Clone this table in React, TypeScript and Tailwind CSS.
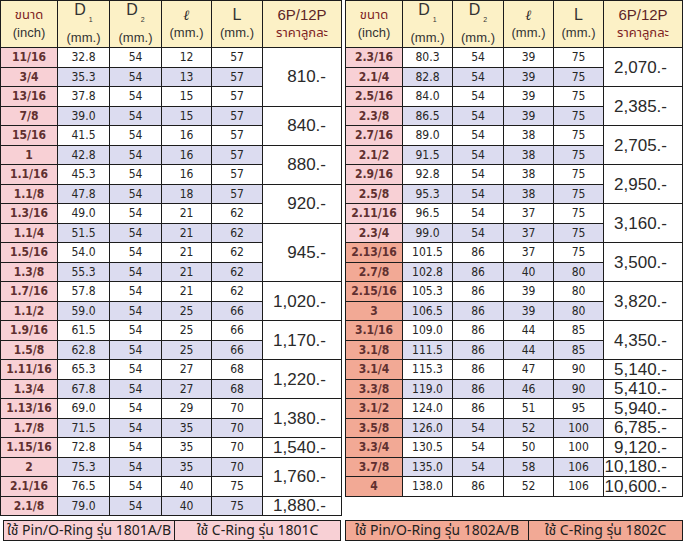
const left: string[][] = [
  ['11/16', '32.8', '54', '12', '57'],
  ['3/4', '35.3', '54', '13', '57'],
  ['13/16', '37.8', '54', '15', '57'],
  ['7/8', '39.0', '54', '15', '57'],
  ['15/16', '41.5', '54', '16', '57'],
  ['1', '42.8', '54', '16', '57'],
  ['1.1/16', '45.3', '54', '16', '57'],
  ['1.1/8', '47.8', '54', '18', '57'],
  ['1.3/16', '49.0', '54', '21', '62'],
  ['1.1/4', '51.5', '54', '21', '62'],
  ['1.5/16', '54.0', '54', '21', '62'],
  ['1.3/8', '55.3', '54', '21', '62'],
  ['1.7/16', '57.8', '54', '21', '62'],
  ['1.1/2', '59.0', '54', '25', '66'],
  ['1.9/16', '61.5', '54', '25', '66'],
  ['1.5/8', '62.8', '54', '25', '66'],
  ['1.11/16', '65.3', '54', '27', '68'],
  ['1.3/4', '67.8', '54', '27', '68'],
  ['1.13/16', '69.0', '54', '29', '70'],
  ['1.7/8', '71.5', '54', '35', '70'],
  ['1.15/16', '72.8', '54', '35', '70'],
  ['2', '75.3', '54', '35', '70'],
  ['2.1/16', '76.5', '54', '40', '75'],
  ['2.1/8', '79.0', '54', '40', '75'],
]

const leftPrices: [string, number][] = [
  ['810.-', 3], ['840.-', 2], ['880.-', 2], ['920.-', 2], ['945.-', 3], ['1,020.-', 2],
  ['1,170.-', 2], ['1,220.-', 2], ['1,380.-', 2], ['1,540.-', 1], ['1,760.-', 2], ['1,880.-', 1],
]

const right: string[][] = [
  ['2.3/16', '80.3', '54', '39', '75'],
  ['2.1/4', '82.8', '54', '39', '75'],
  ['2.5/16', '84.0', '54', '39', '75'],
  ['2.3/8', '86.5', '54', '39', '75'],
  ['2.7/16', '89.0', '54', '38', '75'],
  ['2.1/2', '91.5', '54', '38', '75'],
  ['2.9/16', '92.8', '54', '38', '75'],
  ['2.5/8', '95.3', '54', '38', '75'],
  ['2.11/16', '96.5', '54', '37', '75'],
  ['2.3/4', '99.0', '54', '37', '75'],
  ['2.13/16', '101.5', '86', '37', '75'],
  ['2.7/8', '102.8', '86', '40', '80'],
  ['2.15/16', '105.3', '86', '39', '80'],
  ['3', '106.5', '86', '39', '80'],
  ['3.1/16', '109.0', '86', '44', '85'],
  ['3.1/8', '111.5', '86', '44', '85'],
  ['3.1/4', '115.3', '86', '47', '90'],
  ['3.3/8', '119.0', '86', '46', '90'],
  ['3.1/2', '124.0', '86', '51', '95'],
  ['3.5/8', '126.0', '54', '52', '100'],
  ['3.3/4', '130.5', '54', '50', '100'],
  ['3.7/8', '135.0', '54', '58', '106'],
  ['4', '138.0', '86', '52', '106'],
]

const rightPrices: [string, number][] = [
  ['2,070.-', 2], ['2,385.-', 2], ['2,705.-', 2], ['2,950.-', 2], ['3,160.-', 2], ['3,500.-', 2],
  ['3,820.-', 2], ['4,350.-', 2], ['5,140.-', 1], ['5,410.-', 1], ['5,940.-', 1], ['6,785.-', 1],
  ['9,120.-', 1], ['10,180.-', 1], ['10,600.-', 1],
]

const cell = 'border border-[#1c1c1c] p-0 text-center'
const thai = "font-['Noto_Sans_Thai','Noto_Sans','DejaVu_Sans',sans-serif]"

function Header() {
  return (
    <tr className="h-[47px] bg-[#fcf1c6] font-['Liberation_Sans',sans-serif] font-normal">
      <th className={`${cell} font-normal leading-[18px]`}>
        <div className={`${thai} text-[13px] text-[#7e2323]`}>ขนาด</div>
        <div className="text-[13px] text-[#333]">(inch)</div>
      </th>
      {['1', '2'].map((n) => (
        <th key={n} className={`${cell} font-normal leading-[18px] text-[#333]`}>
          <div className="text-[16px]">
            D<span className="ml-[3px] align-[-7px] text-[7px]">{n}</span>
          </div>
          <div className="text-[13px]">(mm.)</div>
        </th>
      ))}
      <th className={`${cell} font-normal leading-[18px] text-[#333]`}>
        <div className="font-['DejaVu_Serif',serif] text-[14px] font-bold italic text-[#222]">ℓ</div>
        <div className="text-[13px]">(mm.)</div>
      </th>
      <th className={`${cell} font-normal leading-[18px] text-[#333]`}>
        <div className="text-[16px]">L</div>
        <div className="text-[13px]">(mm.)</div>
      </th>
      <th className={`${cell} font-normal leading-[18px]`}>
        <div className="text-[15px] text-[#5c2626]">6P/12P</div>
        <div className={`${thai} text-[13px] text-[#7e2323]`}>ราคาลูกละ</div>
      </th>
    </tr>
  )
}

function PriceTable({
  rows,
  prices,
  widths,
  salmonFrom,
}: {
  rows: string[][]
  prices: [string, number][]
  widths: number[]
  salmonFrom: number
}) {
  const starts = new Map<number, [string, number]>()
  let i = 0
  for (const p of prices) {
    starts.set(i, p)
    i += p[1]
  }
  const total = widths.reduce((a, b) => a + b, 0)

  return (
    <table className="table-fixed border-collapse" style={{ width: total }}>
      <colgroup>
        {widths.map((w, k) => (
          <col key={k} style={{ width: w }} />
        ))}
      </colgroup>
      <thead>
        <Header />
      </thead>
      <tbody>
        {rows.map((r, idx) => {
          const stripe = idx % 2 === 1 ? 'bg-[#dcdcf0]' : 'bg-white'
          const p = starts.get(idx)
          return (
            <tr key={r[0]} className="h-[19.5px] font-['DejaVu_Sans_Condensed','DejaVu_Sans',sans-serif] text-[12px] leading-none">
              <td
                className={`${cell} font-bold text-[#603030] ${idx >= salmonFrom ? 'bg-[#f2a995]' : 'bg-[#f8d0d5]'}`}
              >
                {r[0]}
              </td>
              {r.slice(1).map((v, k) => (
                <td key={k} className={`${cell} ${stripe} text-[#262626]`}>
                  {v}
                </td>
              ))}
              {p && (
                <td
                  rowSpan={p[1]}
                  className={`${cell} bg-white pr-[15px] text-right font-['Liberation_Sans',sans-serif] text-[17px] text-[#2a2a2a]`}
                >
                  {p[0]}
                </td>
              )}
            </tr>
          )
        })}
      </tbody>
    </table>
  )
}

function Footer({ a, b, split, bg }: { a: string; b: string; split: number; bg: string }) {
  return (
    <div className={`flex h-[21px] border border-[#1c1c1c] ${bg} ${thai} text-[14px] leading-[19px] text-[#222]`}>
      <div className="border-r border-[#1c1c1c] text-center" style={{ width: split }}>
        {a}
      </div>
      <div className="flex-1 text-center">{b}</div>
    </div>
  )
}

export default function App() {
  return (
    <div className="flex h-[541px] w-[683px] gap-[4px] overflow-hidden bg-white">
      <div className="flex w-[341px] flex-col">
        <PriceTable rows={left} prices={leftPrices} widths={[57, 52, 52, 50, 51, 79]} salmonFrom={99} />
        <div className="mt-auto pl-[3px]">
          <Footer a="ใช้ Pin/O-Ring รุ่น 1801A/B" b="ใช้ C-Ring รุ่น 1801C" split={171} bg="bg-[#f8d0d5]" />
        </div>
      </div>
      <div className="flex w-[338px] flex-col">
        <PriceTable rows={right} prices={rightPrices} widths={[57, 50, 51, 50, 50, 79]} salmonFrom={10} />
        <div className="mt-auto">
          <Footer a="ใช้ Pin/O-Ring รุ่น 1802A/B" b="ใช้ C-Ring รุ่น 1802C" split={183} bg="bg-[#f2a995]" />
        </div>
      </div>
    </div>
  )
}
